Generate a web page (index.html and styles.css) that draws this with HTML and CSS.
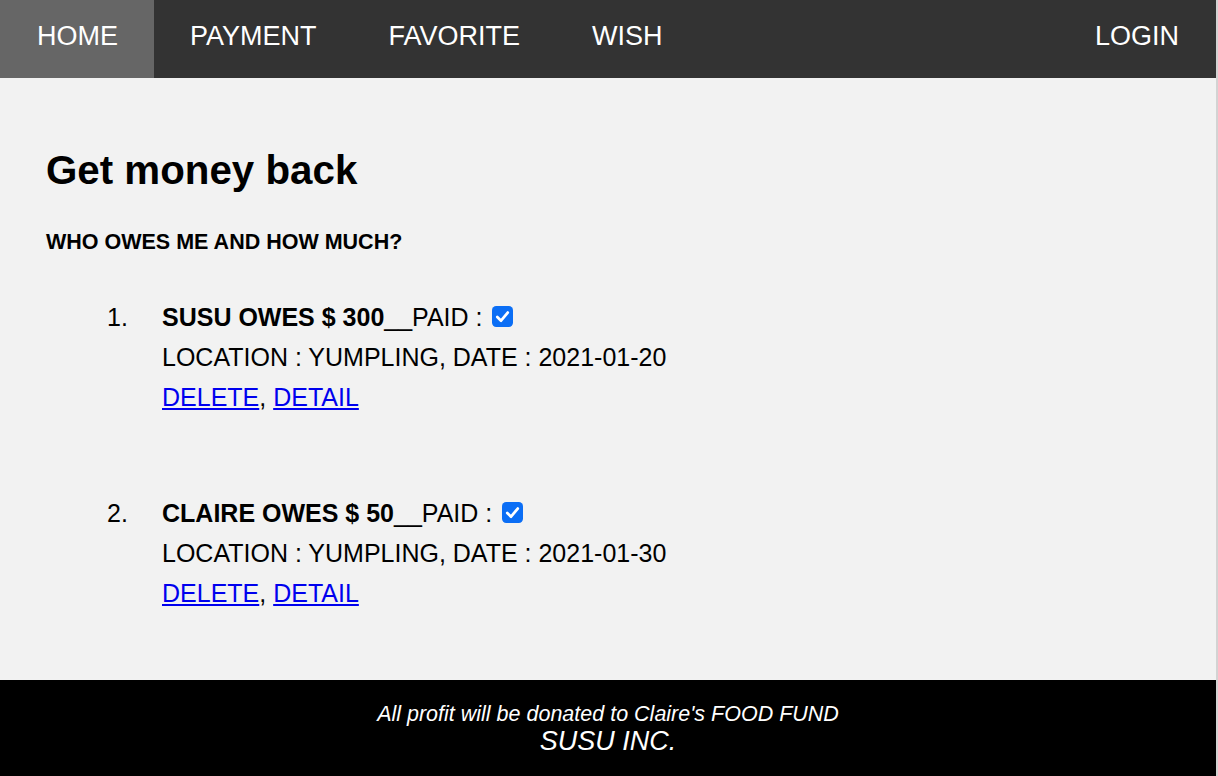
FILE: index.html
```html
<!DOCTYPE html>
<html lang="en">
<head>
<meta charset="utf-8">
<title>Get money back</title>
<link rel="stylesheet" href="styles.css">
</head>
<body>
<div class="page">
  <nav class="topnav">
    <a class="nav-link active" href="#">HOME</a>
    <a class="nav-link" href="#">PAYMENT</a>
    <a class="nav-link" href="#">FAVORITE</a>
    <a class="nav-link" href="#">WISH</a>
    <a class="nav-link nav-right" href="#">LOGIN</a>
  </nav>
  <main class="content">
    <h1 class="title">Get money back</h1>
    <h4 class="subtitle">WHO OWES ME AND HOW MUCH?</h4>
    <ol class="debts">
      <li class="debt">
        <div class="debt-body">
          <div class="line"><b>SUSU OWES $ 300</b>__PAID : <span class="check"><svg viewBox="0 0 20 20" width="20" height="20"><rect x="0" y="0" width="20" height="20" rx="4" fill="#0b6ef5"/><path d="M5 10.5 L8.6 14 L15 6.2" fill="none" stroke="#fff" stroke-width="2.6" stroke-linecap="round" stroke-linejoin="round"/></svg></span></div>
          <div class="line">LOCATION : YUMPLING, DATE : 2021-01-20</div>
          <div class="line"><a href="#">DELETE</a>, <a href="#">DETAIL</a></div>
        </div>
      </li>
      <li class="debt">
        <div class="debt-body">
          <div class="line"><b>CLAIRE OWES $ 50</b>__PAID : <span class="check"><svg viewBox="0 0 20 20" width="20" height="20"><rect x="0" y="0" width="20" height="20" rx="4" fill="#0b6ef5"/><path d="M5 10.5 L8.6 14 L15 6.2" fill="none" stroke="#fff" stroke-width="2.6" stroke-linecap="round" stroke-linejoin="round"/></svg></span></div>
          <div class="line">LOCATION : YUMPLING, DATE : 2021-01-30</div>
          <div class="line"><a href="#">DELETE</a>, <a href="#">DETAIL</a></div>
        </div>
      </li>
    </ol>
  </main>
  <footer class="footer">
    <p class="footer-note">All profit will be donated to Claire's FOOD FUND</p>
    <p class="footer-brand">SUSU INC.</p>
  </footer>
</div>
</body>
</html>
```
FILE: styles.css
```css
html {
  background: #d3d3d3;
}
body {
  margin: 0 2px 0 0;
  font-family: "Liberation Sans", Arial, Helvetica, sans-serif;
}
.page {
  display: flex;
  flex-direction: column;
  height: 776px;
  background: #f2f2f2;
}
.topnav {
  display: flex;
  background: #333333;
  height: 78px;
  flex: 0 0 78px;
}
.nav-link {
  display: block;
  color: #ffffff;
  text-decoration: none;
  font-size: 27px;
  line-height: 30px;
  padding: 21px 36px 27px;
}
.nav-link.active {
  background: #666666;
  padding-left: 37px;
  padding-right: 36px;
}
.nav-right {
  margin-left: auto;
  padding-right: 37px;
}
.content {
  flex: 1;
  padding: 70px 46px 0;
  color: #000;
}
.title {
  margin: 0;
  font-size: 40.3px;
  line-height: 46px;
  font-weight: bold;
}
.subtitle {
  margin: 37px 0 0;
  font-size: 21.5px;
  line-height: 23px;
  font-weight: bold;
}
.debts {
  list-style: none;
  counter-reset: debt;
  margin: 43px 0 0;
  padding: 0 0 0 61px;
}
.debt {
  counter-increment: debt;
  display: grid;
  grid-template-columns: 55px 1fr;
  font-size: 25px;
  line-height: 40px;
}
.debt + .debt {
  margin-top: 76px;
}
.debt::before {
  content: counter(debt) ".";
}
.debt-body a {
  color: #0000ee;
  text-decoration: underline;
}
.check {
  display: inline-block;
  width: 21px;
  height: 21px;
  margin-left: 3px;
  vertical-align: -1px;
}
.check svg {
  display: block;
  width: 21px;
  height: 21px;
}
.footer {
  flex: 0 0 96px;
  background: #000;
  color: #fff;
  text-align: center;
  font-style: italic;
  padding-top: 21px;
  box-sizing: border-box;
}
.footer-note {
  margin: 0;
  font-size: 21.5px;
  line-height: 26px;
}
.footer-brand {
  margin: 0;
  font-size: 27px;
  line-height: 28px;
}
```
